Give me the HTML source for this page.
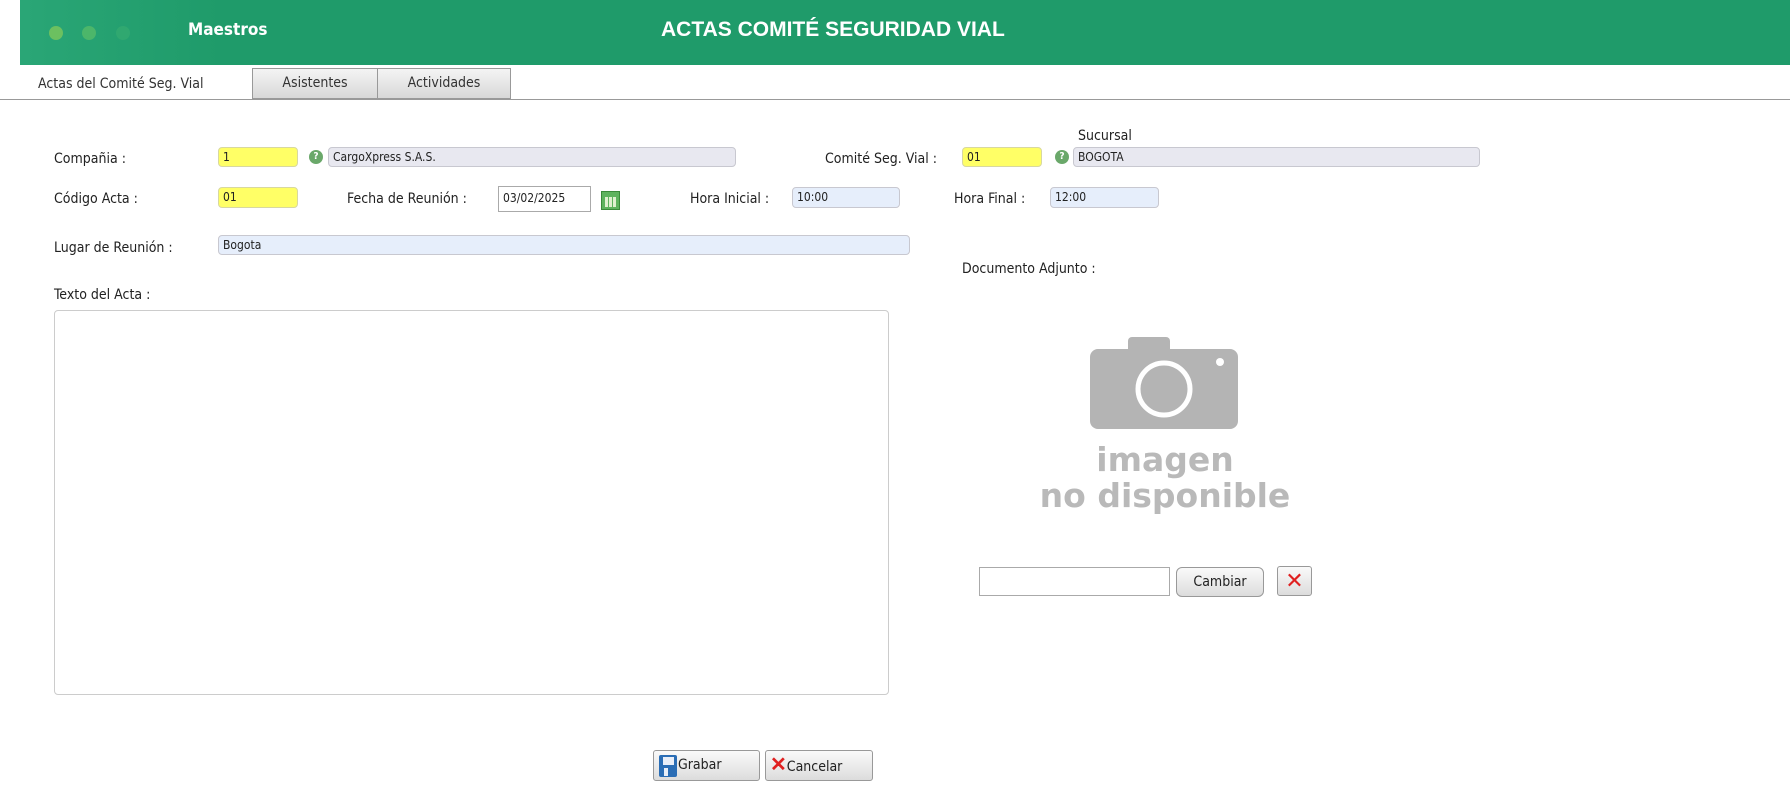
<!DOCTYPE html>
<html><head><meta charset="utf-8"><style>
*{box-sizing:border-box}
body{margin:0;width:1790px;height:790px;background:#fff;font-family:"DejaVu Sans Condensed","Liberation Sans",sans-serif;font-size:14px;color:#222;position:relative;overflow:hidden}
.a{position:absolute;white-space:nowrap}
.l{margin-top:3px}
.hdr{left:20px;top:0;width:1770px;height:65px;background:linear-gradient(90deg,#2aa676 0,#1f9b6a 200px,#1f9b6a)}
.dot{width:14px;height:14px;border-radius:50%;top:26px}
.inp{position:absolute;border:1px solid #c8c8d0;border-radius:4px;font-size:12px;padding:2px 4px;line-height:14px}
.y{background:#ffff66;border-color:#d8d8a0}
.g{background:#e8e8f0}
.b{background:#e6eefb}
.tab{position:absolute;top:68px;height:31px;border:1px solid #999;background:linear-gradient(#f4f4f4,#d8d8d8);text-align:center;line-height:28px;font-size:14px;color:#333}
.btn{position:absolute;border:1px solid #999;border-radius:3px;background:linear-gradient(#fafafa,#dcdcdc);font-size:14px}
.q{position:absolute;width:14px;height:14px;border-radius:50%;background:#6aa86a;color:#fff;font-size:10px;line-height:14px;text-align:center;font-weight:bold}
</style></head><body>
<div class="a hdr"></div>
<div class="a dot" style="left:49px;background:#6cc060"></div>
<div class="a dot" style="left:82px;background:#4cb66a"></div>
<div class="a dot" style="left:116px;background:#30a870"></div>
<div class="a" style="left:188px;top:20px;color:#fff;font-weight:bold;font-size:17px">Maestros</div>
<div class="a" style="left:661px;top:18px;color:#fff;font-weight:bold;font-size:21px;font-family:'Liberation Sans',sans-serif">ACTAS COMITÉ SEGURIDAD VIAL</div>
<div class="a" style="left:0;top:99px;width:1790px;height:1px;background:#999"></div>
<div class="a" style="left:38px;top:76px;font-size:14px;color:#333">Actas del Comité Seg. Vial</div>
<div class="tab" style="left:252px;width:126px">Asistentes</div>
<div class="tab" style="left:377px;width:134px">Actividades</div>

<div class="a l" style="left:54px;top:148px">Compañia :</div>
<div class="inp y" style="left:218px;top:147px;width:80px;height:20px">1</div>
<div class="q" style="left:309px;top:150px">?</div>
<div class="inp g" style="left:328px;top:147px;width:408px;height:20px">CargoXpress S.A.S.</div>
<div class="a l" style="left:825px;top:148px">Comité Seg. Vial :</div>
<div class="inp y" style="left:962px;top:147px;width:80px;height:20px">01</div>
<div class="q" style="left:1055px;top:150px">?</div>
<div class="a" style="left:1078px;top:128px">Sucursal</div>
<div class="inp g" style="left:1073px;top:147px;width:407px;height:20px">BOGOTA</div>

<div class="a l" style="left:54px;top:188px">Código Acta :</div>
<div class="inp y" style="left:218px;top:187px;width:80px;height:21px">01</div>
<div class="a l" style="left:347px;top:188px">Fecha de Reunión :</div>
<div class="inp" style="left:498px;top:186px;width:93px;height:26px;border-radius:0;border-color:#aaa;line-height:19px">03/02/2025</div>
<div class="a" style="left:601px;top:191px;width:19px;height:19px;background:#5eb35e;border:1px solid #3a8a3a"><div style="margin:5px 3px 0;height:10px;background:repeating-linear-gradient(90deg,#dff0d0 0 3px,#5eb35e 3px 4px)"></div></div>
<div class="a l" style="left:690px;top:188px">Hora Inicial :</div>
<div class="inp b" style="left:792px;top:187px;width:108px;height:21px">10:00</div>
<div class="a l" style="left:954px;top:188px">Hora Final :</div>
<div class="inp b" style="left:1050px;top:187px;width:109px;height:21px">12:00</div>

<div class="a l" style="left:54px;top:237px">Lugar de Reunión :</div>
<div class="inp b" style="left:218px;top:235px;width:692px;height:20px">Bogota</div>
<div class="a l" style="left:962px;top:258px">Documento Adjunto :</div>
<div class="a l" style="left:54px;top:284px">Texto del Acta :</div>
<div class="a" style="left:54px;top:310px;width:835px;height:385px;border:1px solid #ccc;border-radius:4px"></div>

<svg class="a" style="left:1090px;top:337px" width="148" height="92" viewBox="0 0 148 92"><rect x="38" y="0" width="42" height="16" rx="4" fill="#b4b4b4"/><rect x="0" y="12" width="148" height="80" rx="8" fill="#b4b4b4"/><circle cx="74" cy="52" r="26" fill="none" stroke="#fff" stroke-width="5"/><circle cx="130" cy="25" r="4" fill="#fff"/></svg>
<div class="a" style="left:1000px;top:442px;width:330px;text-align:center;font-family:'DejaVu Sans',sans-serif;font-weight:bold;font-size:33px;line-height:36px;color:#b9b9b9">imagen<br>no disponible</div>

<div class="a" style="left:979px;top:567px;width:191px;height:29px;border:1px solid #aaa"></div>
<div class="btn" style="left:1176px;top:567px;width:88px;height:30px;border-radius:6px;text-align:center;line-height:28px">Cambiar</div>
<div class="btn" style="left:1277px;top:566px;width:35px;height:30px;text-align:center;line-height:28px;color:#e02020;font-size:22px;font-family:'Liberation Sans',sans-serif">✕</div>

<div class="btn" style="left:653px;top:750px;width:107px;height:31px;line-height:29px;padding-left:24px"><span style="position:absolute;left:5px;top:4px;width:18px;height:22px;background:#2a6db5;border-radius:2px"><span style="position:absolute;left:4px;top:2px;width:11px;height:8px;background:#e8eef8"></span><span style="position:absolute;left:5px;top:13px;width:4px;height:8px;background:#e8eef8"></span></span>Grabar</div>
<div class="btn" style="left:765px;top:750px;width:108px;height:31px;line-height:29px;padding-left:4px"><span style="color:#e02020;font-weight:bold;font-size:20px;font-family:'Liberation Sans',sans-serif">✕</span>Cancelar</div>
</body></html>
